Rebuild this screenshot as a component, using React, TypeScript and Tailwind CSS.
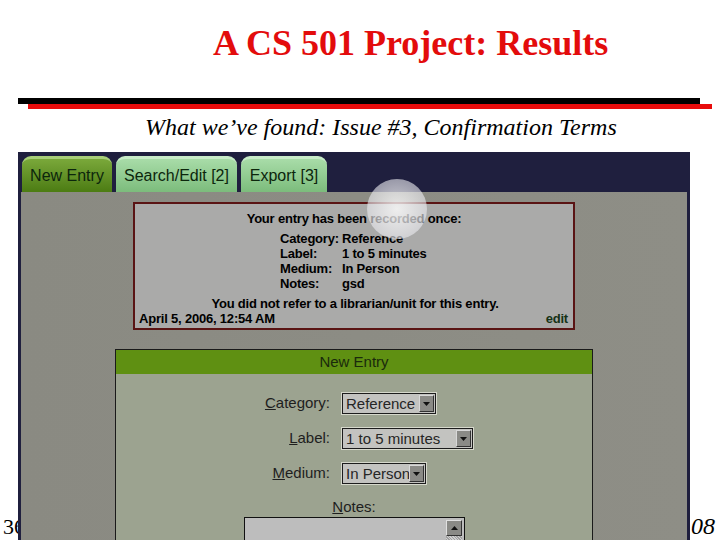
import React from 'react';

const sans = { fontFamily: '"Liberation Sans", Arial, sans-serif' };
const serif = { fontFamily: '"Liberation Serif", "Times New Roman", serif' };

function Tab({ label, width, active }: { label: string; width: string; active?: boolean }) {
  return (
    <div
      className={`${width} h-[36px] rounded-t-[9px] flex items-center justify-center text-[16px] text-[#0c260c] border-t-[3px] ${
        active
          ? 'bg-gradient-to-b from-[#7aa83a] to-[#4c7c12] border-[#a8cf78]'
          : 'bg-gradient-to-b from-[#a8dca8] to-[#7cbc7c] border-[#c8ecc8]'
      }`}
    >
      {label}
    </div>
  );
}

function Select({ value, width }: { value: string; width: string }) {
  return (
    <div className={`${width} h-[23px] border border-[#d6d8cc] bg-[#1c1c1c] p-[1px] flex`}>
      <div className="flex-1 bg-[#c3c3c0] flex items-center pl-[3px] text-[15px] text-[#262626] leading-none overflow-hidden whitespace-nowrap">
        {value}
      </div>
      <div className="w-[16px] bg-[#c3c3c0] flex items-center py-[1px] pr-[1px]">
        <div className="w-[15px] h-full bg-[#8a8a86] border border-t-[#d8d8d8] border-l-[#d8d8d8] border-r-[#333] border-b-[#333] flex items-center justify-center">
          <svg width="7" height="4" viewBox="0 0 7 4"><path d="M0 0h7L3.5 4z" fill="#111" /></svg>
        </div>
      </div>
    </div>
  );
}

function FieldRow({ label, rest, value, width }: { label: string; rest: string; value: string; width: string }) {
  return (
    <div className="flex items-center gap-[11px]">
      <div className="w-[214px] text-right text-[15px] text-[#1e1e1e]">
        <span className="underline">{label}</span>
        {rest}
      </div>
      <Select value={value} width={width} />
    </div>
  );
}

export default function App() {
  return (
    <div className="relative w-[720px] h-[540px] overflow-hidden bg-white" style={serif}>
      {/* footer text lying under the screenshot */}
      <div className="absolute left-[3px] top-[510px] text-[22px] text-black">36</div>
      <div className="absolute left-[691px] top-[508px] text-[24px] italic text-black">08</div>

      <div className="pt-[23px] pl-[213px] text-[36px] leading-[40px] font-bold text-[#e30c0c] whitespace-nowrap">
        A CS 501 Project: Results
      </div>

      <div className="mt-[35px] ml-[18px] w-[682px] h-[6px] bg-black" />
      <div className="ml-[28px] w-[684px] h-[5px] bg-[#e80c0c]" />

      <div className="mt-[5px] pl-[145px] text-[24px] leading-[26px] italic text-black whitespace-nowrap">
        What we’ve found: Issue #3, Confirmation Terms
      </div>

      <div className="relative z-10 mt-[12px] ml-[18px] w-[672px] h-[420px] bg-[#1f1f3e] px-[3px]" style={sans}>
        <div className="h-[40px] pt-[4px] pl-[1px] flex gap-[4px]">
          <Tab label="New Entry" width="w-[90px]" active />
          <Tab label="Search/Edit [2]" width="w-[121px]" />
          <Tab label="Export [3]" width="w-[86px]" />
        </div>

        <div className="bg-gradient-to-r from-[#8a8a82] to-[#8e8e86] h-full pt-[10px]">
          {/* confirmation box */}
          <div className="ml-[112px] w-[442px] h-[128px] border-2 border-[#5a1414] bg-[#aaaaa9] px-[4px] pt-[7px] text-[13px] font-bold text-black leading-[15px] tracking-[-0.2px]">
            <div className="text-center">Your entry has been recorded once:</div>
            <div className="mt-[5px] ml-[141px] grid grid-cols-[62px_auto]">
              <span>Category:</span><span>Reference</span>
              <span>Label:</span><span>1 to 5 minutes</span>
              <span>Medium:</span><span>In Person</span>
              <span>Notes:</span><span>gsd</span>
            </div>
            <div className="mt-[5px] text-center pl-[2px]">You did not refer to a librarian/unit for this entry.</div>
            <div className="flex justify-between">
              <span>April 5, 2006, 12:54 AM</span>
              <span className="text-[#163216] pr-[1px]">edit</span>
            </div>
          </div>

          {/* new entry form */}
          <div className="mt-[19px] ml-[94px] w-[478px] h-[260px] border-x border-t border-[#1a1a1a] bg-[#9ca390]">
            <div className="h-[24px] bg-[#5f9012] flex items-center justify-center text-[15px] text-[#1a2a0c]">
              New Entry
            </div>
            <div className="pt-[18px] flex flex-col gap-[12px]">
              <FieldRow label="C" rest="ategory:" value="Reference" width="w-[96px]" />
              <FieldRow label="L" rest="abel:" value="1 to 5 minutes" width="w-[133px]" />
              <FieldRow label="M" rest="edium:" value="In Person" width="w-[86px]" />
            </div>
            <div className="mt-[13px] text-center text-[15px] text-[#1e1e1e] leading-[17px]">
              <span className="underline">N</span>otes:
            </div>
            <div className="mt-[2px] ml-[128px] w-[221px] h-[70px] border border-[#111] bg-[#bdbdbd] flex justify-end p-[2px]">
              <div className="w-[16px] flex flex-col">
                <div className="h-[16px] bg-[#8a8a86] border border-t-[#e0e0e0] border-l-[#e0e0e0] border-r-[#333] border-b-[#333] flex items-center justify-center">
                  <svg width="7" height="4" viewBox="0 0 7 4"><path d="M3.5 0L7 4H0z" fill="#111" /></svg>
                </div>
                <div className="flex-1 bg-[repeating-linear-gradient(45deg,#d0d0d0_0px,#d0d0d0_1px,#a0a0a0_1px,#a0a0a0_2px)]" />
              </div>
            </div>
          </div>
        </div>

        {/* pointer highlight */}
        <div className="absolute left-[349px] top-[27px] w-[60px] h-[60px] rounded-full bg-[radial-gradient(circle,rgba(255,255,255,0.8)_0%,rgba(235,235,240,0.6)_70%,rgba(255,255,255,0)_100%)]" />
      </div>
    </div>
  );
}
